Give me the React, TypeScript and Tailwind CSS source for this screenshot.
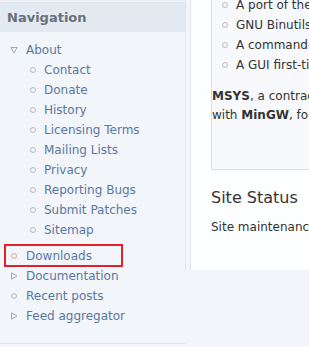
import React from "react";

type NavItem = { label: string; kind: "open" | "closed" | "leaf"; children?: string[] };

const nav: NavItem[] = [
	{
		label: "About",
		kind: "open",
		children: [
			"Contact",
			"Donate",
			"History",
			"Licensing Terms",
			"Mailing Lists",
			"Privacy",
			"Reporting Bugs",
			"Submit Patches",
			"Sitemap",
		],
	},
	{ label: "Downloads", kind: "leaf" },
	{ label: "Documentation", kind: "closed" },
	{ label: "Recent posts", kind: "leaf" },
	{ label: "Feed aggregator", kind: "closed" },
];

const boxItems = [
	"A port of the GNU Compiler Collection (GCC)",
	"GNU Binutils for Windows (assembler, linker)",
	"A command-line installer for MinGW and MSYS",
	"A GUI first-time installer wrapper",
];

function Bullet({ pink }: { pink?: boolean }) {
	return (
		<span
			className={`inline-block w-[6px] h-[6px] rounded-full border ${pink ? "border-[#d3a9b0]" : "border-[#b9bcc0]"}`}
		/>
	);
}

function Triangle({ down }: { down?: boolean }) {
	return (
		<svg width="8" height="8" viewBox="0 0 8 8" className="block">
			{down ? (
				<path d="M0.8 1.5 L7.2 1.5 L4 7 Z" fill="none" stroke="#a9adb3" strokeWidth="1" />
			) : (
				<path d="M1.5 0.8 L7 4 L1.5 7.2 Z" fill="none" stroke="#a9adb3" strokeWidth="1" />
			)}
		</svg>
	);
}

export default function App() {
	return (
		<div
			className="relative w-[309px] h-[347px] overflow-hidden bg-[#f2f5f9] flex items-start text-[12px]"
			style={{ fontFamily: '"DejaVu Sans", Verdana, sans-serif' }}
		>
			{/* Sidebar */}
			<div className="w-[185px] shrink-0 pb-[17px] border-b border-[#dde3ea]">
				<div className="h-[3px] bg-[#eef2f6] border-b border-[#dfe5ec]" />
				<div className="h-[29px] bg-[#e3e9f1] flex items-center pl-[7px] text-[13px] font-bold text-[#69717c]">
					Navigation
				</div>
				<ul className="pt-[8px] text-[#5a78a2]">
					{nav.map(item => (
						<li key={item.label}>
							<div className="h-[20px] flex items-center">
								<span className="w-[26px] flex justify-center pl-[2px]">
									{item.kind === "leaf" ? (
										<Bullet pink={item.label === "Downloads"} />
									) : (
										<Triangle down={item.kind === "open"} />
									)}
								</span>
								<span className="whitespace-nowrap">{item.label}</span>
							</div>
							{item.children && (
								<ul className="mb-[6px]">
									{item.children.map(child => (
										<li key={child} className="h-[20px] flex items-center">
											<span className="w-[44px] flex justify-end pr-[8px]">
												<Bullet />
											</span>
											<span className="whitespace-nowrap">{child}</span>
										</li>
									))}
								</ul>
							)}
						</li>
					))}
				</ul>
			</div>

			{/* Main column */}
			<div className="h-[270px] w-[124px] shrink-0 border-l border-[#e2e7ee] pl-[4px] bg-[#f2f5f9]">
				<div className="h-full border-l border-[#e2e7ee] bg-[#fdfeff] pl-[20px] overflow-hidden">
					<div className="w-[420px] -mt-[5px] border-l border-b border-[#d9dee5] bg-[#f7f9fc] h-[175px] text-[#333]">
						<ul>
							{boxItems.map(t => (
								<li key={t} className="h-[20px] flex items-center">
									<span className="w-[24px] flex justify-end pr-[8px]">
										<Bullet />
									</span>
									<span className="whitespace-nowrap">{t}</span>
								</li>
							))}
						</ul>
						<div className="mt-[12px] leading-[19px]">
							<p className="whitespace-nowrap">
								<b>MSYS</b>, a contraction of "Minimal SYStem", is a Bourne Shell
							</p>
							<p className="whitespace-nowrap">
								with <b>MinGW</b>, for use with the POSIX utilities
							</p>
						</div>
					</div>
					<h2 className="mt-[18px] text-[16px] leading-[20px] text-[#333] whitespace-nowrap">Site Status</h2>
					<p className="mt-[10px] text-[#333] whitespace-nowrap">Site maintenance is in progress.</p>
				</div>
			</div>

			{/* annotation box around Downloads */}
			<div className="absolute left-[4px] top-[244px] w-[119px] h-[23px] border-2 border-[#e0212c]" />
		</div>
	);
}
